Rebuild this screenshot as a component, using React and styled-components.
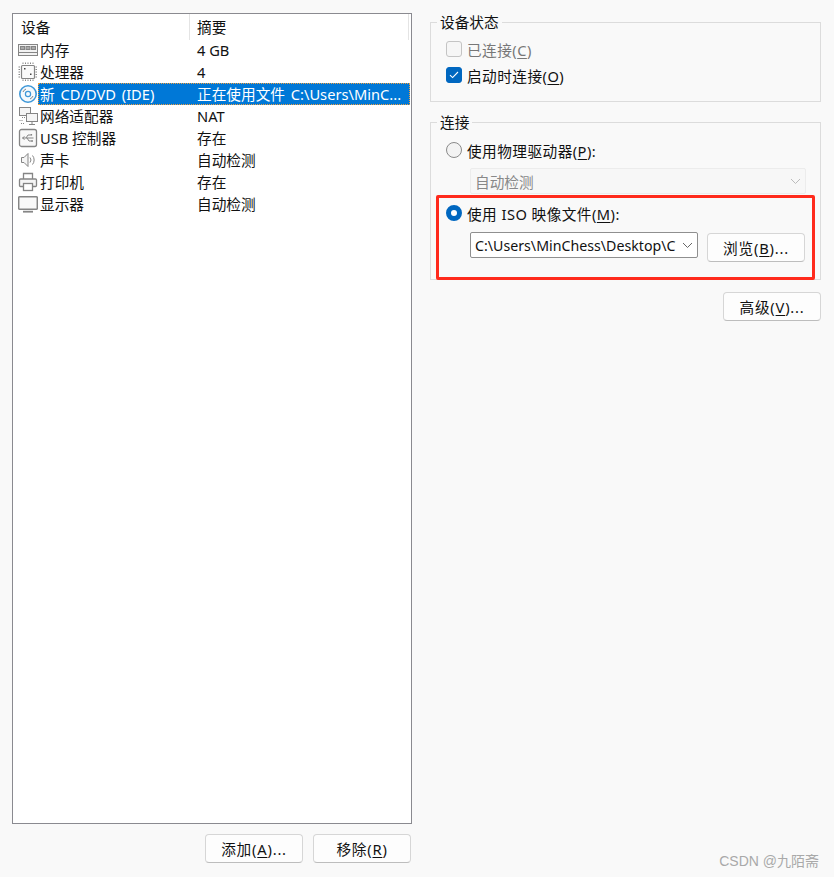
import styled, { createGlobalStyle } from "styled-components";

const GlobalStyle = createGlobalStyle`
  html, body {
    margin: 0;
    background: #f9f9f9;
  }
  body {
    font-family: "Noto Sans", "Noto Sans CJK SC", sans-serif;
    font-size: 14.67px;
    color: #111;
  }
  u {
    text-underline-offset: 2px;
    text-decoration-thickness: 1px;
  }
`;

const Page = styled.div`
  position: relative;
  width: 834px;
  height: 877px;
  box-sizing: border-box;
  padding: 13px 13px 14px 12px;
  display: grid;
  grid-template-columns: 400px 391px;
  column-gap: 18px;
  overflow: hidden;
`;

const LeftColumn = styled.div`
  display: flex;
  flex-direction: column;
  width: 400px;
`;

const DeviceList = styled.div`
  height: 811px;
  box-sizing: border-box;
  background: #fff;
  border: 1px solid #8a8a90;
`;

const HeaderRow = styled.div`
  display: grid;
  grid-template-columns: 177px 219px;
  height: 25px;
  line-height: 26px;
`;

const HeaderCell = styled.div`
  padding-left: ${(p) => p.$pad}px;
  border-right: 1px solid #e4e4e4;
  margin-bottom: 1px;
`;

const Row = styled.div`
  display: flex;
  height: 22px;
  line-height: 22px;
`;

const IconBox = styled.div`
  flex: none;
  width: 25px;
  padding-left: 5px;
  box-sizing: border-box;
  display: flex;
  align-items: center;
`;

const RowBody = styled.div`
  flex: 1;
  display: grid;
  grid-template-columns: 152px 1fr;
  margin-right: 1px;
  word-spacing: ${(p) => (p.$selected ? "2px" : "0")};
  background: ${(p) => (p.$selected ? "#0078d7" : "transparent")};
  color: ${(p) => (p.$selected ? "#fff" : "#111")};
  outline: ${(p) => (p.$selected ? "1px dotted #f0a040" : "none")};
  outline-offset: -1px;
`;

const NameCell = styled.div`
  padding-left: 2px;
  white-space: pre;
`;

const SummaryCell = styled.div`
  padding-left: 7px;
  white-space: pre;
`;

const ListActions = styled.div`
  display: flex;
  justify-content: flex-end;
  gap: 10px;
  margin: 10px 1px 0 0;
`;

const Button = styled.button`
  width: 98px;
  height: 29px;
  box-sizing: border-box;
  padding: 0;
  background: #fdfdfd;
  border: 1px solid #d6d6d6;
  border-bottom-color: #bdbdbd;
  border-radius: 4px;
  font: inherit;
  letter-spacing: 0.8px;
  color: #111;
`;

const RightColumn = styled.div`
  display: flex;
  flex-direction: column;
`;

const Group = styled.fieldset`
  position: relative;
  margin: 0;
  min-width: 0;
  box-sizing: border-box;
  height: ${(p) => p.$height}px;
  padding: 0 0 0 15px;
  border: 1px solid #dcdcdc;
`;

const Legend = styled.legend`
  margin-left: -9px;
  padding: 0 3px;
  height: 20px;
  line-height: 20px;
`;

const StatusGroup = styled(Group)`
  margin-top: -1px;
`;

const ConnectGroup = styled(Group)`
  margin-top: 10px;
`;

const OptionRow = styled.div`
  display: flex;
  align-items: center;
  gap: 5px;
  height: 22px;
  letter-spacing: 0.45px;
  margin-top: ${(p) => p.$top || 0}px;
  color: ${(p) => (p.$disabled ? "#777" : "#111")};
`;

const CheckBox = styled.span`
  flex: none;
  width: 16px;
  height: 16px;
  box-sizing: border-box;
  border-radius: 3px;
  border: 1px solid ${(p) => (p.$checked ? "#0067c0" : "#c4c4c4")};
  background: ${(p) => (p.$checked ? "#0067c0" : "#f6f6f6")};
  display: flex;
  align-items: center;
  justify-content: center;
`;

const Radio = styled.span`
  flex: none;
  width: 16px;
  height: 16px;
  box-sizing: border-box;
  border-radius: 50%;
  background: ${(p) => (p.$checked ? "#fff" : "#f3f3f3")};
  border: ${(p) => (p.$checked ? "5px solid #0067c0" : "1px solid #8a8a8a")};
`;

const Select = styled.div`
  display: flex;
  align-items: center;
  justify-content: space-between;
  box-sizing: border-box;
  width: ${(p) => p.$width}px;
  height: 26px;
  padding: 0 4px;
  background: ${(p) => (p.$disabled ? "#f7f7f7" : "#fff")};
  border: 1px solid ${(p) => (p.$disabled ? "#ececec" : "#8f8f8f")};
  border-radius: 2px;
  color: ${(p) => (p.$disabled ? "#888" : "#111")};
`;

const SelectText = styled.span`
  font-size: 14.2px;
  white-space: nowrap;
`;

const IndentedSelect = styled(Select)`
  margin: 7px 0 0 24px;
`;

const FileRow = styled.div`
  display: flex;
  align-items: flex-start;
  gap: 9px;
  margin: 8px 0 0 24px;
`;

const BrowseButton = styled(Button)`
  margin-top: 1px;
`;

const AdvancedRow = styled.div`
  display: flex;
  justify-content: flex-end;
  margin-top: 12px;
`;

const Highlight = styled.div`
  position: absolute;
  left: 5px;
  top: 63px;
  width: 379px;
  height: 85px;
  box-sizing: border-box;
  border: 3px solid #ff2a1c;
  border-radius: 2px;
  pointer-events: none;
`;

const Watermark = styled.div`
  position: absolute;
  right: 15px;
  bottom: 7px;
  color: #a9a9a9;
  font-family: "Liberation Sans", "Noto Sans CJK SC", sans-serif;
  font-size: 14px;
  line-height: 18px;
`;

const Svg = ({ children, w = 20, h = 20 }) => (
  <svg width={w} height={h} viewBox="0 0 20 20" fill="none" stroke="#858585" strokeWidth="1">
    {children}
  </svg>
);

const MemoryIcon = () => (
  <Svg>
    <rect x="0.5" y="4.5" width="19" height="11" fill="#f2f2f2" />
    <rect x="2.5" y="6.5" width="4" height="3" fill="#aaa" />
    <rect x="8" y="6.5" width="4" height="3" fill="#aaa" />
    <rect x="13.5" y="6.5" width="4" height="3" fill="#aaa" />
    <path d="M1 12.5h18" />
  </Svg>
);

const CpuIcon = () => (
  <Svg>
    <rect x="3.5" y="3.5" width="13" height="13" rx="1" fill="#fafafa" strokeWidth="1.2" />
    <path
      d="M5 0.5v2M7.5 0.5v2M10 0.5v2M12.5 0.5v2M15 0.5v2M5 17.5v2M7.5 17.5v2M10 17.5v2M12.5 17.5v2M15 17.5v2M0.5 5h2M0.5 7.5h2M0.5 10h2M0.5 12.5h2M0.5 15h2M17.5 5h2M17.5 7.5h2M17.5 10h2M17.5 12.5h2M17.5 15h2"
      strokeDasharray="1.5 0.5"
    />
    <rect x="6" y="6" width="1.5" height="1.5" fill="#444" stroke="none" />
    <rect x="12" y="11.5" width="1.5" height="1.5" fill="#444" stroke="none" />
  </Svg>
);

const DiscIcon = () => (
  <svg width="20" height="20" viewBox="0 0 20 20" fill="none" stroke="#3f98d8" strokeWidth="1.6">
    <circle cx="10" cy="10" r="8.2" fill="#f4f9fd" />
    <circle cx="10" cy="10" r="2.6" strokeWidth="1.2" />
    <path d="M5 8a5.5 5.5 0 0 1 3-3M15 12a5.5 5.5 0 0 1-3 3" strokeWidth="1" stroke="#858585" />
  </svg>
);

const NetworkIcon = () => (
  <Svg>
    <rect x="1.5" y="1.5" width="11" height="8" fill="#f5f5f5" />
    <path d="M4 11.5h5M1.5 14.5h4M3 17.5h3" strokeDasharray="1 1" />
    <rect x="8.5" y="7.5" width="11" height="8" fill="#f5f5f5" />
    <path d="M14 15.5v2.5M11 18.5h6" />
  </Svg>
);

const UsbIcon = () => (
  <Svg>
    <rect x="1.5" y="1.5" width="17" height="17" rx="2" fill="#f8f8f8" strokeWidth="1.3" />
    <path d="M4.5 10h11M4.5 10l2-1.5M4.5 10l2 1.5M8 10l2-3h2.5M9 10l2 3h2" />
    <rect x="12.5" y="6" width="1.6" height="1.6" fill="#858585" stroke="none" />
    <circle cx="14" cy="13" r="1" fill="#858585" stroke="none" />
  </Svg>
);

const SpeakerIcon = () => (
  <Svg>
    <path d="M3.5 7.5h2.5l4-4v13l-4-4h-2.5z" fill="#f5f5f5" />
    <path d="M12 7.5a4 4 0 0 1 0 5M14.5 5.5a7 7 0 0 1 0 9" />
  </Svg>
);

const PrinterIcon = () => (
  <Svg>
    <path d="M5.5 7V1.5h9V7" strokeWidth="1.3" />
    <rect x="1.5" y="7" width="17" height="7.5" rx="1" fill="#f5f5f5" strokeWidth="1.3" />
    <rect x="5.5" y="11.5" width="9" height="7" fill="#fff" strokeWidth="1.3" />
  </Svg>
);

const MonitorIcon = () => (
  <Svg>
    <rect x="0.7" y="2.7" width="18.6" height="12.6" rx="1" fill="#f9f9f9" strokeWidth="1.5" />
    <path d="M5 17.7h10" strokeWidth="1.8" />
  </Svg>
);

const Chevron = ({ color = "#666" }) => (
  <svg width="11" height="7" viewBox="0 0 11 7" fill="none" stroke={color} strokeWidth="1">
    <path d="M1 1l4.5 4.5L10 1" />
  </svg>
);

const Check = () => (
  <svg width="10" height="8" viewBox="0 0 10 8" fill="none" stroke="#fff" strokeWidth="1.1">
    <path d="M1 4.2l2.6 2.4L9 1" />
  </svg>
);

const devices = [
  { icon: <MemoryIcon />, name: "内存", summary: "4 GB" },
  { icon: <CpuIcon />, name: "处理器", summary: "4" },
  { icon: <DiscIcon />, name: "新 CD/DVD (IDE)", summary: "正在使用文件 C:\\Users\\MinC...", selected: true },
  { icon: <NetworkIcon />, name: "网络适配器", summary: "NAT" },
  { icon: <UsbIcon />, name: "USB 控制器", summary: "存在" },
  { icon: <SpeakerIcon />, name: "声卡", summary: "自动检测" },
  { icon: <PrinterIcon />, name: "打印机", summary: "存在" },
  { icon: <MonitorIcon />, name: "显示器", summary: "自动检测" },
];

export default function App() {
  return (
    <Page>
      <GlobalStyle />
      <LeftColumn>
        <DeviceList>
          <HeaderRow>
            <HeaderCell $pad={8}>设备</HeaderCell>
            <HeaderCell $pad={7}>摘要</HeaderCell>
          </HeaderRow>
          {devices.map((d) => (
            <Row key={d.name}>
              <IconBox>{d.icon}</IconBox>
              <RowBody $selected={d.selected}>
                <NameCell>{d.name}</NameCell>
                <SummaryCell>{d.summary}</SummaryCell>
              </RowBody>
            </Row>
          ))}
        </DeviceList>
        <ListActions>
          <Button>添加(<u>A</u>)...</Button>
          <Button>移除(<u>R</u>)</Button>
        </ListActions>
      </LeftColumn>

      <RightColumn>
        <StatusGroup $height={90}>
          <Legend>设备状态</Legend>
          <OptionRow $disabled $top={6}>
            <CheckBox />
            <span>已连接(<u>C</u>)</span>
          </OptionRow>
          <OptionRow $top={4}>
            <CheckBox $checked>
              <Check />
            </CheckBox>
            <span>启动时连接(<u>O</u>)</span>
          </OptionRow>
        </StatusGroup>

        <ConnectGroup $height={168}>
          <Legend>连接</Legend>
          <OptionRow $top={7}>
            <Radio />
            <span>使用物理驱动器(<u>P</u>):</span>
          </OptionRow>
          <IndentedSelect $disabled $width={336}>
            <span>自动检测</span>
            <Chevron color="#bbb" />
          </IndentedSelect>
          <OptionRow $top={8}>
            <Radio $checked />
            <span>使用 ISO 映像文件(<u>M</u>):</span>
          </OptionRow>
          <FileRow>
            <Select $width={228}>
              <SelectText>C:\Users\MinChess\Desktop\C</SelectText>
              <Chevron />
            </Select>
            <BrowseButton>浏览(<u>B</u>)...</BrowseButton>
          </FileRow>
          <Highlight />
        </ConnectGroup>

        <AdvancedRow>
          <Button>高级(<u>V</u>)...</Button>
        </AdvancedRow>
      </RightColumn>

      <Watermark>CSDN @九陌斋</Watermark>
    </Page>
  );
}
